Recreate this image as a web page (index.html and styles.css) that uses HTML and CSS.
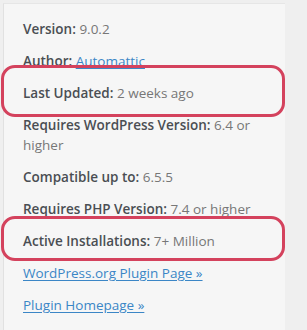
FILE: index.html
```html
<!DOCTYPE html>
<html lang="en">
<head>
  <meta charset="UTF-8">
  <meta name="viewport" content="width=device-width, initial-scale=1.0">
  <title>Plugin Details</title>
  <link rel="stylesheet" href="styles.css">
</head>
<body>
  <div class="panel">
    <ul class="meta">
      <li><strong>Version:</strong> 9.0.2</li>
      <li><strong>Author:</strong> <a href="#">Automattic</a></li>
      <li class="marked marked-updated"><strong>Last Updated:</strong> 2 weeks ago</li>
      <li><strong>Requires WordPress Version:</strong> 6.4 or higher</li>
      <li><strong>Compatible up to:</strong> 6.5.5</li>
      <li><strong>Requires PHP Version:</strong> 7.4 or higher</li>
      <li class="marked marked-installs"><strong>Active Installations:</strong> 7+ Million</li>
      <li><a href="#">WordPress.org Plugin Page »</a></li>
      <li><a href="#">Plugin Homepage »</a></li>
    </ul>
  </div>
</body>
</html>
```

FILE: styles.css
```css
* { margin: 0; padding: 0; box-sizing: border-box; }
html, body {
  height: 100%;
  background: #efefef;
  font-family: 'Open Sans', sans-serif;
  color: #777;
  overflow: hidden;
}
body {
  padding: 3px 0 0 3px;
}
.panel {
  width: 282px;
  height: 100%;
  background: #f6f6f6;
  border-left: 1px solid #e1e1e1;
  border-top: 1px solid #e6e6e6;
  padding: 15px 17px 0 19px;
}
.meta {
  list-style: none;
  font-size: 13.5px;
  line-height: 20px;
}
.meta li {
  margin-bottom: 12px;
}
.meta strong {
  font-weight: 600;
  color: #4a4e53;
}
.meta a {
  color: #3b86c6;
  text-decoration: underline;
  text-underline-offset: 2px;
}
.marked {
  position: relative;
}
.marked::before {
  content: '';
  position: absolute;
  border: 3px solid #d4425d;
  border-radius: 14px;
}
.marked-updated::before {
  top: -18px;
  bottom: -14px;
  left: -22px;
  right: -17px;
}
.marked-installs::before {
  top: -15px;
  bottom: -10px;
  left: -22px;
  right: -17px;
}
```
